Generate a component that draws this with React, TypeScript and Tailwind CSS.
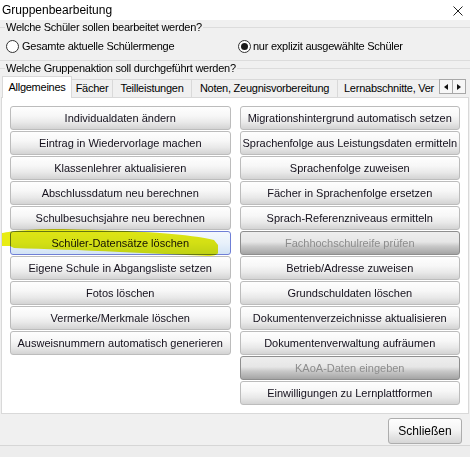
import React from "react";

const leftButtons: { label: string; state?: "focus" | "disabled" }[] = [
  { label: "Individualdaten ändern" },
  { label: "Eintrag in Wiedervorlage machen" },
  { label: "Klassenlehrer aktualisieren" },
  { label: "Abschlussdatum neu berechnen" },
  { label: "Schulbesuchsjahre neu berechnen" },
  { label: "Schüler-Datensätze löschen", state: "focus" },
  { label: "Eigene Schule in Abgangsliste setzen" },
  { label: "Fotos löschen" },
  { label: "Vermerke/Merkmale löschen" },
  { label: "Ausweisnummern automatisch generieren" },
];

const rightButtons: { label: string; state?: "focus" | "disabled" }[] = [
  { label: "Migrationshintergrund automatisch setzen" },
  { label: "Sprachenfolge aus Leistungsdaten ermitteln" },
  { label: "Sprachenfolge zuweisen" },
  { label: "Fächer in Sprachenfolge ersetzen" },
  { label: "Sprach-Referenzniveaus ermitteln" },
  { label: "Fachhochschulreife prüfen", state: "disabled" },
  { label: "Betrieb/Adresse zuweisen" },
  { label: "Grundschuldaten löschen" },
  { label: "Dokumentenverzeichnisse aktualisieren" },
  { label: "Dokumentenverwaltung aufräumen" },
  { label: "KAoA-Daten eingeben", state: "disabled" },
  { label: "Einwilligungen zu Lernplattformen" },
];

function ActionButton({ label, state }: { label: string; state?: "focus" | "disabled" }) {
  let cls =
    "border-[#bcbcbc] bg-[linear-gradient(to_bottom,#fefefe_0%,#f7f7f7_40%,#e9e9e9_70%,#d3d3d3_100%)] text-[#14101c]";
  if (state === "disabled") {
    cls =
      "border-[#8e8e8e] bg-[linear-gradient(to_bottom,#eeeeee_0%,#e6e6e6_45%,#c8c8c8_65%,#a4a4a4_100%)] text-[#8c8c8c]";
  } else if (state === "focus") {
    cls =
      "border-[#6f7fd6] bg-[linear-gradient(to_bottom,#f4f8fd_0%,#e8f1fa_50%,#d2e3f5_100%)] text-[#14101c]";
  }
  return (
    <div
      className={
        "h-[24px] w-full rounded-[3px] border flex items-center justify-center text-[11px] leading-none whitespace-nowrap overflow-hidden " +
        cls
      }
    >
      {label}
    </div>
  );
}

function Radio({ checked }: { checked?: boolean }) {
  return (
    <span className="w-[13px] h-[13px] rounded-full border border-[#333333] bg-white flex items-center justify-center shrink-0">
      {checked && <span className="w-[7px] h-[7px] rounded-full bg-[#1a1a1a]" />}
    </span>
  );
}

export default function App() {
  return (
    <div className="relative w-[470px] h-[457px] overflow-hidden bg-[#f0f0f0] font-['Liberation_Sans',Arial,sans-serif] text-black flex flex-col">
      {/* Title bar */}
      <div className="h-[20px] bg-white flex items-center justify-between pl-[2px] pr-[7px] shrink-0">
        <span className="text-[12px] leading-none">Gruppenbearbeitung</span>
        <svg width="10" height="10" viewBox="0 0 10 10" className="mt-[2px]">
          <path d="M0.5 0.5 L9.5 9.5 M9.5 0.5 L0.5 9.5" stroke="#222" strokeWidth="1" fill="none" />
        </svg>
      </div>

      {/* Group 1 */}
      <fieldset className="mt-[1px] border-y border-x-0 border-[#dcdcdc] pb-[7px] shrink-0">
        <legend className="ml-[5px] px-[1px] text-[11px] leading-[13px] tracking-[-0.25px]">
          Welche Schüler sollen bearbeitet werden?
        </legend>
        <div className="mt-[6px] flex items-center h-[13px] text-[11px] tracking-[-0.25px]">
          <div className="w-[238px] pl-[6px] flex items-center gap-[3px]">
            <Radio />
            <span>Gesamte aktuelle Schülermenge</span>
          </div>
          <div className="flex items-center gap-[2px]">
            <Radio checked />
            <span>nur explizit ausgewählte Schüler</span>
          </div>
        </div>
      </fieldset>

      {/* Group 2 header */}
      <div className="mt-[1px] h-[13px] flex items-center shrink-0">
        <div className="w-[5px] h-px bg-[#dcdcdc]" />
        <span className="px-[1px] text-[11px] leading-[13px] tracking-[-0.25px]">
          Welche Gruppenaktion soll durchgeführt werden?
        </span>
        <div className="flex-1 h-px bg-[#dcdcdc]" />
      </div>

      {/* Tabs */}
      <div className="mt-[1px] h-[22px] -mb-px relative z-10 flex items-start pl-[2px] shrink-0">
        <div className="w-[437px] h-[22px] overflow-hidden flex items-end text-[11px] tracking-[-0.25px] leading-none">
          <div className="w-[70px] h-[22px] shrink-0 bg-white border border-b-0 border-[#d9d9d9] flex items-center justify-center pb-[1px]">
            Allgemeines
          </div>
          <div className="w-[41px] h-[18px] mb-[1px] shrink-0 border-t border-r border-[#d9d9d9] bg-[#f0f0f0] flex items-center justify-center">
            Fächer
          </div>
          <div className="w-[79px] h-[18px] mb-[1px] shrink-0 border-t border-r border-[#d9d9d9] bg-[#f0f0f0] flex items-center justify-center">
            Teilleistungen
          </div>
          <div className="w-[146px] h-[18px] mb-[1px] shrink-0 border-t border-r border-[#d9d9d9] bg-[#f0f0f0] flex items-center justify-center">
            Noten, Zeugnisvorbereitung
          </div>
          <div className="w-[101px] h-[18px] mb-[1px] shrink-0 border-t border-[#d9d9d9] bg-[#f0f0f0] flex items-center pl-[6px] whitespace-nowrap">
            Lernabschnitte, Ver
          </div>
        </div>
        <div className="mt-[3px] flex">
          <div className="w-[14px] h-[15px] border border-[#a8a8a8] bg-[#f7f7f7] flex items-center justify-center">
            <svg width="4" height="6" viewBox="0 0 4 6">
              <path d="M4 0 L0 3 L4 6 Z" fill="#111" />
            </svg>
          </div>
          <div className="w-[14px] h-[15px] -ml-px border border-[#a8a8a8] bg-[#f7f7f7] flex items-center justify-center">
            <svg width="4" height="6" viewBox="0 0 4 6">
              <path d="M0 0 L4 3 L0 6 Z" fill="#111" />
            </svg>
          </div>
        </div>
      </div>

      {/* Tab panel */}
      <div className="ml-[1px] w-[468px] h-[317px] border border-[#d9d9d9] bg-white pt-[8px] px-[8px] shrink-0">
        <div className="grid grid-cols-2 gap-x-[9px]">
          <div className="flex flex-col gap-[1px]">
            {leftButtons.map((b) => (
              <ActionButton key={b.label} label={b.label} state={b.state} />
            ))}
          </div>
          <div className="flex flex-col gap-[1px]">
            {rightButtons.map((b) => (
              <ActionButton key={b.label} label={b.label} state={b.state} />
            ))}
          </div>
        </div>
      </div>

      {/* Bottom */}
      <div className="h-[31px] flex justify-end items-start pt-[4px] pr-[8px] shrink-0">
        <div className="w-[74px] h-[26px] rounded-[3px] border border-[#adadad] bg-[linear-gradient(to_bottom,#fefefe_0%,#f5f5f5_45%,#e6e6e6_70%,#d6d6d6_100%)] flex items-center justify-center text-[12px] leading-none">
          Schließen
        </div>
      </div>
      <div className="flex-1 border-t border-[#d6d6d6] bg-[#ededed]" />

      {/* Yellow highlighter annotation */}
      <svg
        className="absolute left-0 top-0 pointer-events-none mix-blend-multiply"
        width="470"
        height="457"
        viewBox="0 0 470 457"
      >
        <path
          d="M2 233 C12 231 30 229 63 229 C100 230 133 231 160 233 C185 235 203 237 214 240 L218 245 L218 253 C217 255 214 256 208 256 C180 255 150 253 120 252 C80 250 45 249 14 248 L10 246 L2 246 Z"
          fill="#e6ea00"
          opacity="0.92"
        />
      </svg>
    </div>
  );
}
